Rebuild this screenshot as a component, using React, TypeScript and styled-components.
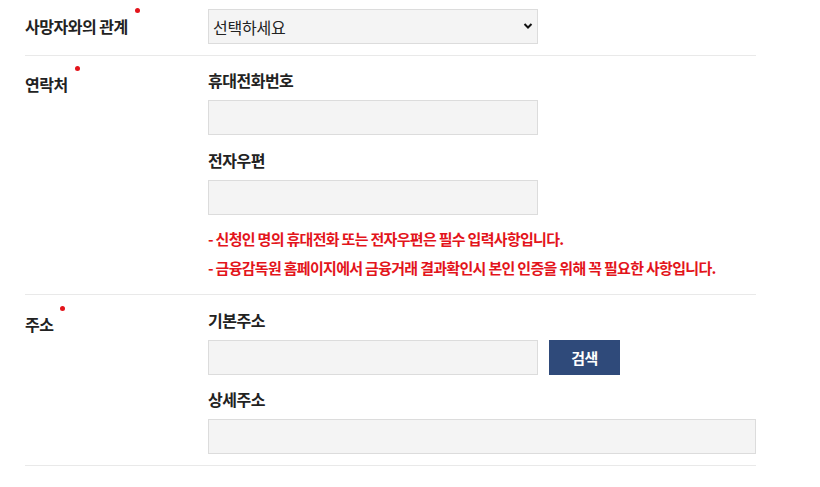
import React from "react";
import styled, { createGlobalStyle } from "styled-components";

const Global = createGlobalStyle`
  html, body { margin: 0; padding: 0; background: #fff; }
  body { font-family: "Noto Sans CJK KR", "Noto Sans", sans-serif; color: #222; }
  * { box-sizing: border-box; }
`;

const Form = styled.div`
  width: 731px;
  margin-left: 25px;
  display: flex;
  flex-direction: column;
`;

const Row = styled.div<{ $pad?: string }>`
  display: grid;
  grid-template-columns: 183px 1fr;
  padding: ${(p) => p.$pad || "12px 0"};
  border-bottom: 1px solid #e9e9e9;
`;

const Label = styled.div<{ $top?: number }>`
  font-size: 16px;
  font-weight: 700;
  letter-spacing: -0.5px;
  line-height: 24px;
  margin-top: ${(p) => p.$top ?? 4}px;
  color: #222;
`;

const Req = styled.span`
  position: relative;
  &::after {
    content: "";
    position: absolute;
    right: -12px;
    top: -6px;
    width: 5px;
    height: 5px;
    border-radius: 50%;
    background: #e3141b;
  }
`;

const Field = styled.div`
  display: flex;
  flex-direction: column;
`;

const SubLabel = styled.div<{ $mt?: number }>`
  font-size: 16px;
  font-weight: 700;
  letter-spacing: -0.5px;
  line-height: 24px;
  margin-top: ${(p) => p.$mt ?? 0}px;
  margin-bottom: 8px;
  color: #222;
`;

const Input = styled.input<{ $w?: number }>`
  width: ${(p) => (p.$w ? `${p.$w}px` : "100%")};
  height: 35px;
  background: #f4f4f4;
  border: 1px solid #dcdcdc;
  outline: none;
  padding: 0 10px;
  font-family: inherit;
  font-size: 15px;
`;

const SelectWrap = styled.div`
  position: relative;
  width: 330px;
  height: 35px;
`;

const Select = styled.select`
  appearance: none;
  width: 100%;
  height: 100%;
  background: #f4f4f4;
  border: 1px solid #dcdcdc;
  padding: 0 0 0 4px;
  font-family: "Noto Sans CJK KR", sans-serif;
  font-size: 16px;
  letter-spacing: -0.2px;
  color: #222;
  outline: none;
`;

const Chevron = styled.svg`
  position: absolute;
  right: 5px;
  top: 13px;
  pointer-events: none;
`;

const InlineRow = styled.div`
  display: flex;
  gap: 11px;
  align-items: center;
`;

const Button = styled.button`
  width: 71px;
  height: 35px;
  background: #2f4a7a;
  color: #fff;
  border: none;
  font-family: inherit;
  font-size: 15px;
  font-weight: 700;
  letter-spacing: -0.5px;
  cursor: pointer;
`;

const Notes = styled.ul`
  list-style: none;
  margin: 12px 0 0;
  padding: 0;
  display: flex;
  flex-direction: column;
  gap: 5px;
`;

const Note = styled.li`
  color: #e3141b;
  font-size: 15px;
  font-weight: 700;
  letter-spacing: -0.7px;
  line-height: 24px;
`;

export default function App() {
  return (
    <>
      <Global />
      <Form>
        <Row $pad="9px 0 11px">
          <Label $top={5}>
            <Req>사망자와의 관계</Req>
          </Label>
          <SelectWrap>
            <Select defaultValue="">
              <option value="">선택하세요</option>
              <option value="1">배우자</option>
              <option value="2">자녀</option>
              <option value="3">부모</option>
            </Select>
            <Chevron width="10" height="8" viewBox="0 0 10 8">
              <path d="M1.5 2 L5 5.5 L8.5 2" fill="none" stroke="#111" strokeWidth="2" />
            </Chevron>
          </SelectWrap>
        </Row>
        <Row $pad="12px 0 14px">
          <Label>
            <Req>연락처</Req>
          </Label>
          <Field>
            <SubLabel>휴대전화번호</SubLabel>
            <Input $w={330} />
            <SubLabel $mt={13}>전자우편</SubLabel>
            <Input $w={330} />
            <Notes>
              <Note>- 신청인 명의 휴대전화 또는 전자우편은 필수 입력사항입니다.</Note>
              <Note>- 금융감독원 홈페이지에서 금융거래 결과확인시 본인 인증을 위해 꼭 필요한 사항입니다.</Note>
            </Notes>
          </Field>
        </Row>
        <Row $pad="13px 0 11px">
          <Label>
            <Req>주소</Req>
          </Label>
          <Field>
            <SubLabel>기본주소</SubLabel>
            <InlineRow>
              <Input $w={330} />
              <Button>검색</Button>
            </InlineRow>
            <SubLabel $mt={12}>상세주소</SubLabel>
            <Input />
          </Field>
        </Row>
      </Form>
    </>
  );
}
